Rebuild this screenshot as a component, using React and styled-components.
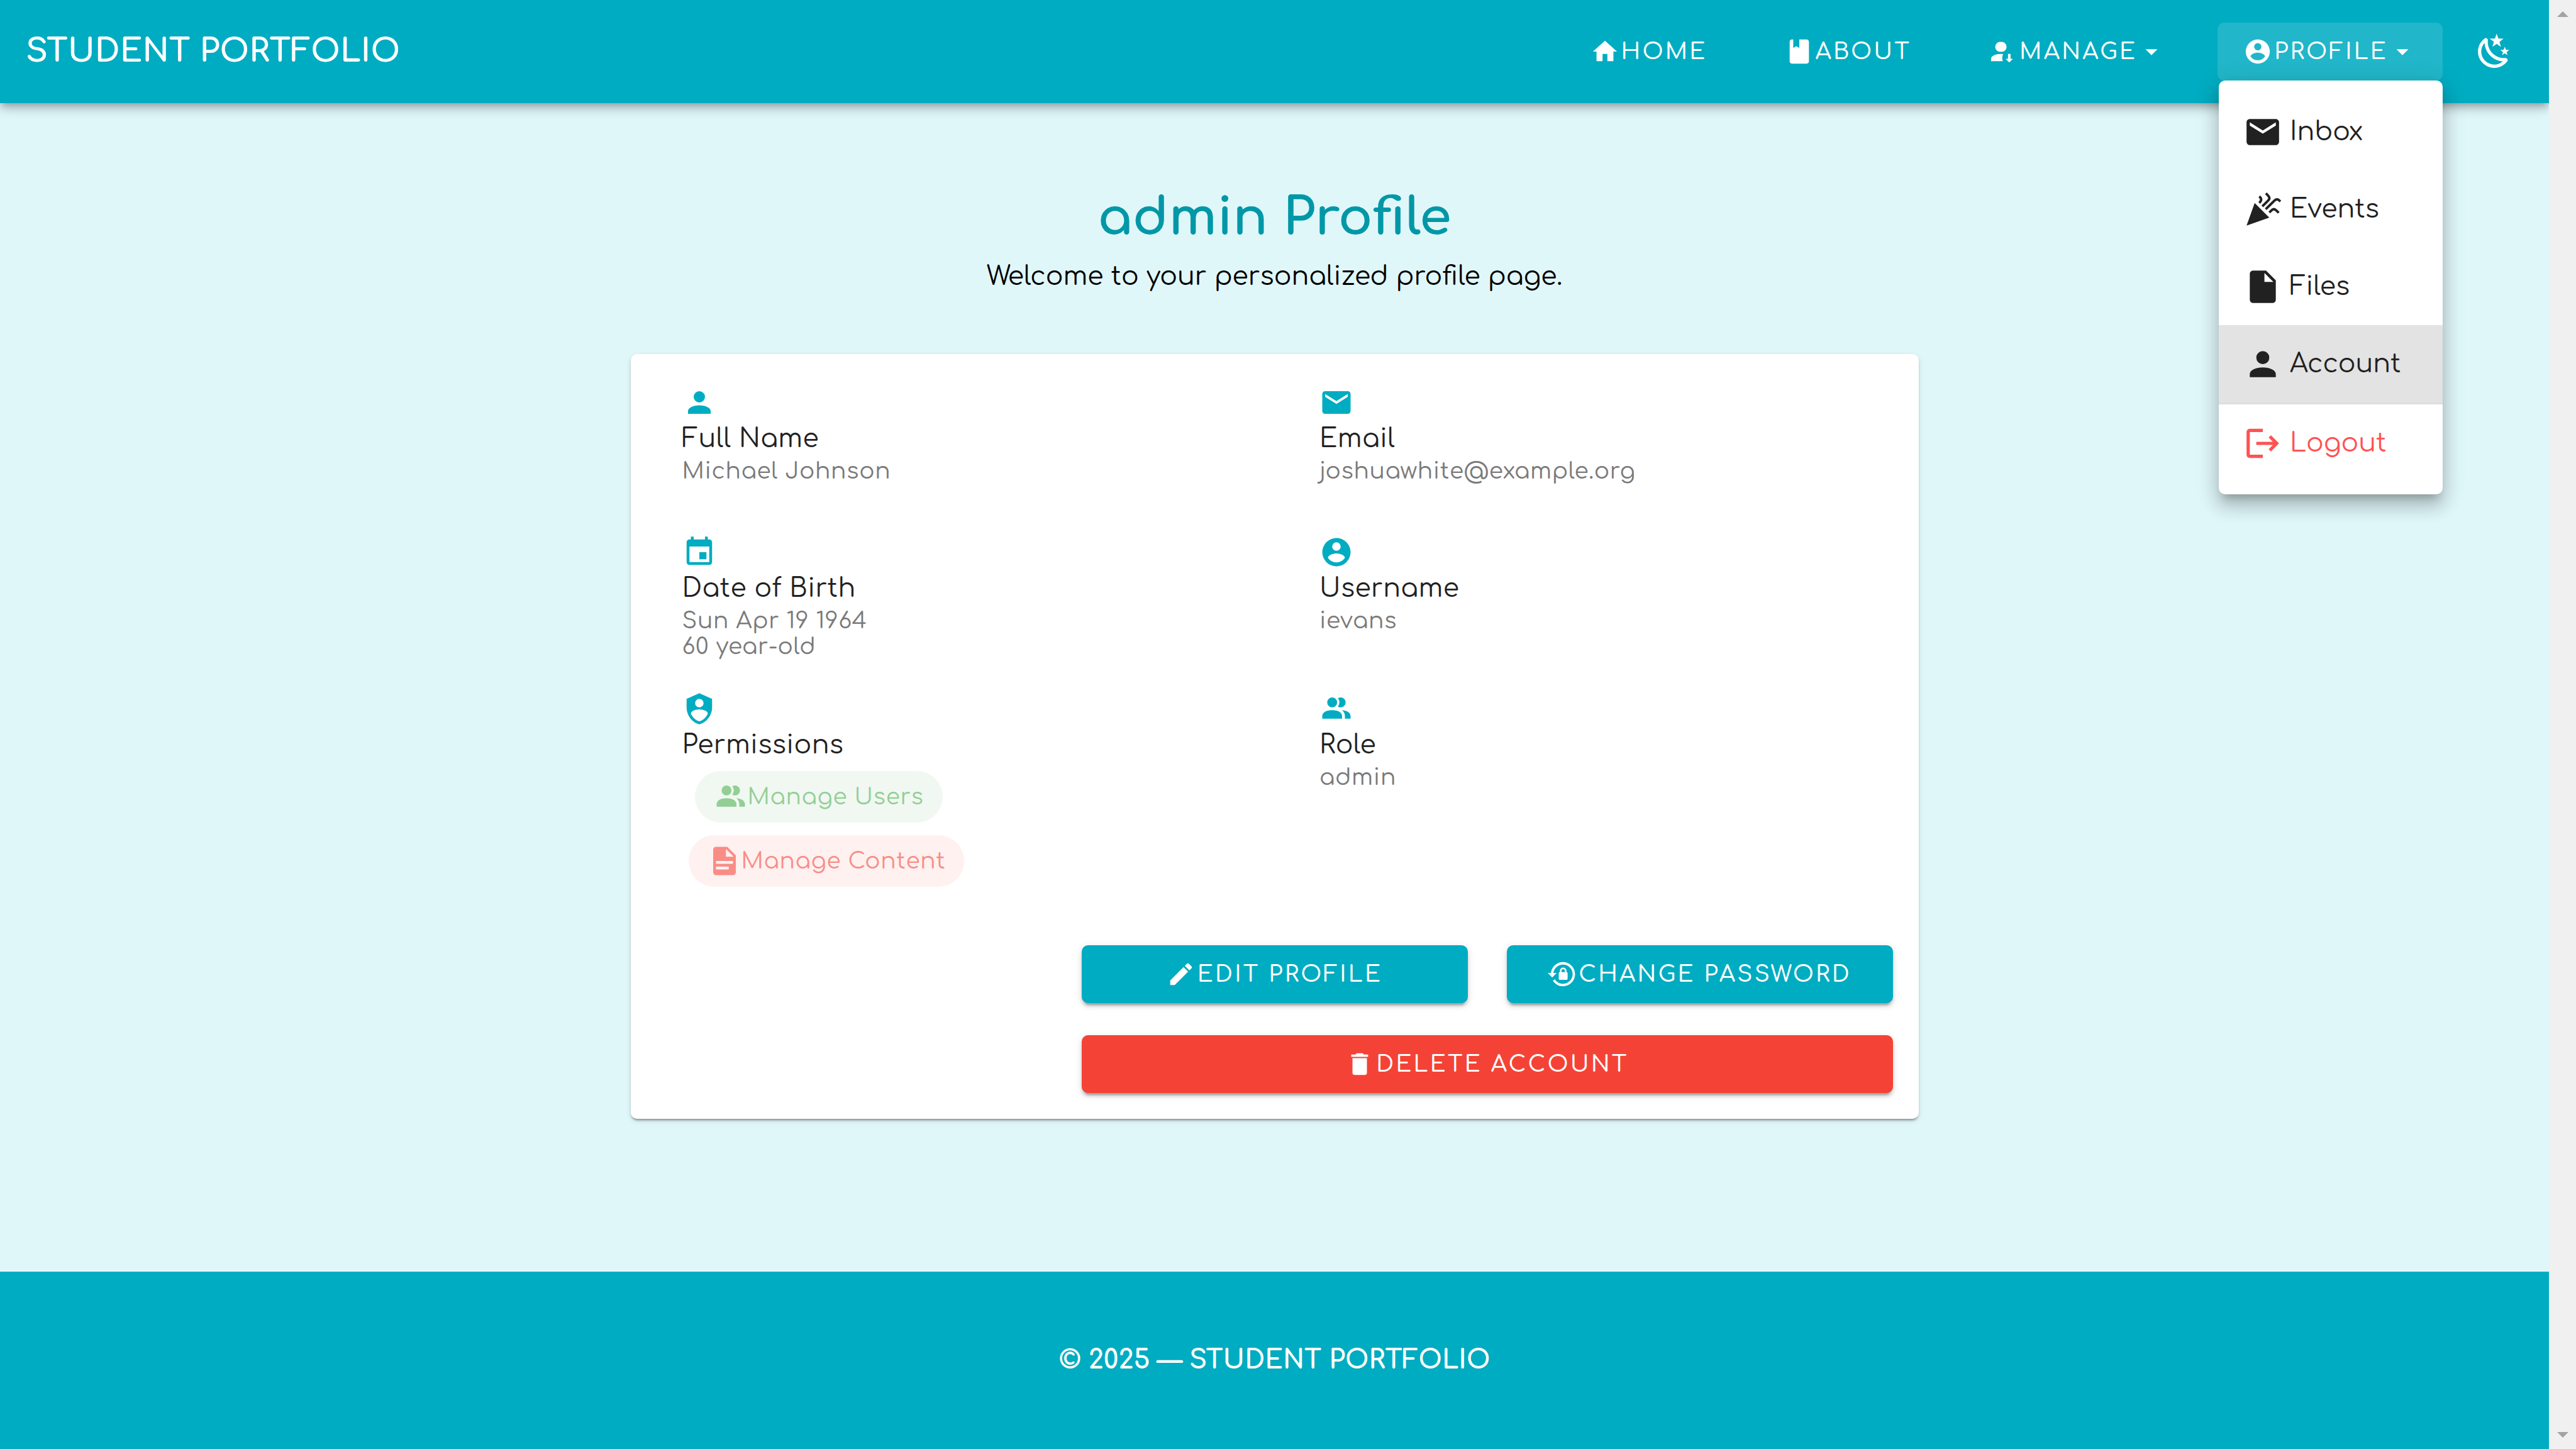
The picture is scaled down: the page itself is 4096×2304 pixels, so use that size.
import React from "react";
import styled, { createGlobalStyle } from "styled-components";

const color = {
  primary: "#00acc1",
  primaryDark: "#0097a7",
  page: "#e0f7fa",
  surface: "#ffffff",
  text: "#212121",
  muted: "#7a7a7a",
  error: "#f44336",
  danger: "#ff5252",
  success: "#4caf50",
};

const GlobalStyle = createGlobalStyle`
  *, *::before, *::after { box-sizing: border-box; }
  body {
    margin: 0;
    background: ${color.page};
    color: ${color.text};
    font-family: Comfortaa, Quicksand, Inter, sans-serif;
    font-size: 41px;
  }
  h1, p, ul, dl, dd { margin: 0; padding: 0; }
  a { color: inherit; text-decoration: none; }
  button { font: inherit; color: inherit; border: 0; background: none; cursor: pointer; }
`;

/* ---------- icons ---------- */

const icons = {
  home: "M10,20V14H14V20H19V12H22L12,3L2,12H5V20H10Z",
  book: "M18,22A2,2 0 0,0 20,20V4C20,2.89 19.1,2 18,2H12V9L9.5,7.5L7,9V2H6A2,2 0 0,0 4,4V20A2,2 0 0,0 6,22H18Z",
  accountArrowDown:
    "M10.2,4A4.1,4.1 0 1,1 10.2,12.1A4.1,4.1 0 1,1 10.2,4M12.1,14.1Q11.3,15.5 11.3,17.2Q11.3,18.8 11.9,20H2V18C2,15.8 5.6,14 10,14Q11,14 12.1,14.1M16.1,14H18.2V18H20.2L17.1,21L14.1,18H16.1Z",
  accountCircle:
    "M12,19.2C9.5,19.2 7.29,17.92 6,16C6.03,14 10,12.9 12,12.9C14,12.9 17.97,14 18,16C16.71,17.92 14.5,19.2 12,19.2M12,5A3,3 0 0,1 15,8A3,3 0 0,1 12,11A3,3 0 0,1 9,8A3,3 0 0,1 12,5M12,2A10,10 0 0,0 2,12A10,10 0 0,0 12,22A10,10 0 0,0 22,12C22,6.47 17.5,2 12,2Z",
  menuDown: "M7,10L12,15L17,10H7Z",
  night:
    "M17.75,4.09L15.22,6.03L16.13,9.09L13.5,7.28L10.87,9.09L11.78,6.03L9.25,4.09L12.44,4L13.5,1L14.56,4L17.75,4.09M21.25,11L19.61,12.25L20.2,14.23L18.5,13.06L16.8,14.23L17.39,12.25L15.75,11L17.81,10.95L18.5,9L19.19,10.95L21.25,11M18.97,15.95C19.8,15.87 20.69,17.05 20.16,17.8C19.84,18.25 19.5,18.67 19.08,19.07C15.17,23 8.84,23 4.94,19.07C1.03,15.17 1.03,8.83 4.94,4.93C5.34,4.53 5.76,4.17 6.21,3.85C6.96,3.32 8.14,4.21 8.06,5.04C7.79,7.9 8.75,10.87 10.95,13.06C13.14,15.26 16.1,16.22 18.97,15.95M17.33,17.97C14.5,17.81 11.7,16.64 9.53,14.5C7.36,12.31 6.2,9.5 6.04,6.68C3.23,9.82 3.34,14.64 6.35,17.66C9.37,20.67 14.19,20.78 17.33,17.97Z",
  email:
    "M20,8L12,13L4,8V6L12,11L20,6M20,4H4C2.89,4 2,4.89 2,6V18A2,2 0 0,0 4,20H20A2,2 0 0,0 22,18V6C22,4.89 21.1,4 20,4Z",
  file: "M13,9V3.5L18.5,9M6,2C4.89,2 4,2.89 4,4V20A2,2 0 0,0 6,22H18A2,2 0 0,0 20,20V8L14,2H6Z",
  account:
    "M12,4A4,4 0 0,1 16,8A4,4 0 0,1 12,12A4,4 0 0,1 8,8A4,4 0 0,1 12,4M12,14C16.42,14 20,15.79 20,18V20H4V18C4,15.79 7.58,14 12,14Z",
  logout:
    "M17 7L15.59 8.41L18.17 11H8V13H18.17L15.59 15.58L17 17L22 12M4 5H12V3H4C2.9 3 2 3.9 2 5V19C2 20.1 2.9 21 4 21H12V19H4V5Z",
  calendar:
    "M19,19H5V8H19M16,1V3H8V1H6V3H5C3.89,3 3,3.89 3,5V19A2,2 0 0,0 5,21H19A2,2 0 0,0 21,19V5C21,3.89 20.1,3 19,3H18V1M17,12H12V17H17V12Z",
  shield:
    "M12,1L3,5V11C3,16.55 6.84,21.74 12,23C17.16,21.74 21,16.55 21,11V5L12,1M12,5A3,3 0 0,1 15,8A3,3 0 0,1 12,11A3,3 0 0,1 9,8A3,3 0 0,1 12,5M17.13,17C15.92,18.85 14.11,20.24 12,20.92C9.89,20.24 8.08,18.85 6.87,17C6.53,16.5 6.24,16 6,15.47C6,13.82 8.71,12.47 12,12.47C15.29,12.47 18,13.79 18,15.47C17.76,16 17.47,16.5 17.13,17Z",
  group:
    "M16 17V19H2V17S2 13 9 13 16 17 16 17M12.5 7.5A3.5 3.5 0 1 0 9 11A3.5 3.5 0 0 0 12.5 7.5M15.94 13A5.32 5.32 0 0 1 18 17V19H22V17S22 13.37 15.94 13M15 4A3.39 3.39 0 0 0 13.07 4.59A5 5 0 0 1 13.07 10.41A3.39 3.39 0 0 0 15 11A3.5 3.5 0 0 0 15 4Z",
  document:
    "M13,9H18.5L13,3.5V9M6,2H14L20,8V20A2,2 0 0,1 18,22H6C4.89,22 4,21.1 4,20V4C4,2.89 4.89,2 6,2M15,18V16H6V18H15M18,14V12H6V14H18Z",
  pencil:
    "M20.71,7.04C21.1,6.65 21.1,6 20.71,5.63L18.37,3.29C18,2.9 17.35,2.9 16.96,3.29L15.12,5.12L18.87,8.87M3,17.25V21H6.75L17.81,9.93L14.06,6.18L3,17.25Z",
  lockReset:
    "M12.63,2C18.16,2 22.64,6.5 22.64,12C22.64,17.5 18.16,22 12.63,22C9.12,22 6.05,20.18 4.26,17.43L5.84,16.18C7.25,18.47 9.76,20 12.64,20A8,8 0 0,0 20.64,12A8,8 0 0,0 12.64,4C8.56,4 5.2,7.06 4.71,11H7.47L3.73,14.73L0,11H2.69C3.19,5.95 7.45,2 12.63,2M15.59,10.24C16.09,10.25 16.5,10.65 16.5,11.16V15.77C16.5,16.27 16.09,16.69 15.58,16.69H10.05C9.54,16.69 9.13,16.27 9.13,15.77V11.16C9.13,10.65 9.54,10.25 10.04,10.24V9.23C10.04,7.7 11.29,6.46 12.81,6.46C14.34,6.46 15.59,7.7 15.59,9.23V10.24M12.81,7.86C12.06,7.86 11.44,8.47 11.44,9.23V10.24H14.19V9.23C14.19,8.47 13.57,7.86 12.81,7.86Z",
  trash: "M19,4H15.5L14.5,3H9.5L8.5,4H5V6H19M6,19A2,2 0 0,0 8,21H16A2,2 0 0,0 18,19V7H6V19Z",
};

const Svg = styled.svg`
  flex: none;
  display: block;
  width: ${(p) => p.$size}px;
  height: ${(p) => p.$size}px;
  fill: currentColor;
`;

function Icon({ name, size = 46 }) {
  if (name === "party") {
    return (
      <Svg $size={size} viewBox="0 0 24 24" aria-hidden="true">
        <path d="M2,22L7,8L16,17Z" />
        <path
          d="M9.8,4C11.4,5.2 11.4,6.6 9.8,8M13.9,2.1L15.3,3.5C16.3,4.5 16.3,5.5 15.3,6.5L11.7,10.1M13.8,11.9L19.1,6.6C20.1,5.6 21.2,5.5 22.1,6.4L22.8,7.1M16,13.9L17.3,12.6C18.3,11.6 19.3,11.6 20.3,12.6L21.8,14.1"
          fill="none"
          stroke="currentColor"
          strokeWidth="1.5"
        />
      </Svg>
    );
  }
  return (
    <Svg $size={size} viewBox="0 0 24 24" aria-hidden="true">
      <path d={icons[name]} />
    </Svg>
  );
}

/* ---------- page frame ---------- */

const Frame = styled.div`
  display: flex;
  min-height: 100vh;
`;

const Page = styled.div`
  flex: 1;
  min-width: 0;
  display: flex;
  flex-direction: column;
`;

const ScrollTrack = styled.div`
  flex: none;
  width: 43px;
  display: flex;
  flex-direction: column;
  align-items: center;
  justify-content: space-between;
  padding: 18px 0;
  background: #f0f0f0;
  color: #a3a3a3;
  position: relative;
  z-index: 3;
`;

const ScrollArrow = styled.svg`
  display: block;
  width: 18px;
  height: 9px;
  fill: currentColor;
`;

/* ---------- header ---------- */

const Header = styled.header`
  position: relative;
  z-index: 2;
  display: flex;
  align-items: center;
  justify-content: space-between;
  height: 164px;
  padding: 0 26px 0 41px;
  background: ${color.primary};
  color: #fff;
  box-shadow: 0 5px 10px -3px rgba(0, 0, 0, 0.2), 0 10px 13px rgba(0, 0, 0, 0.14),
    0 3px 26px rgba(0, 0, 0, 0.12);
`;

const Brand = styled.a`
  font-size: 51px;
  font-weight: 700;
  line-height: 72px;
`;

const Nav = styled.nav`
  display: flex;
  align-items: center;
  gap: 41px;
`;

const NavItem = styled.a`
  display: flex;
  align-items: center;
  height: 92px;
  padding: 0 41px;
  border-radius: 10px;
  background: ${(p) => (p.$active ? "rgba(255, 255, 255, 0.13)" : "transparent")};
  font-size: 36px;
  font-weight: 500;
  letter-spacing: 0.0892857143em;
  text-transform: uppercase;
  white-space: nowrap;

  & > svg:first-child {
    margin-right: 3px;
  }
`;

const NavMenu = styled.div`
  position: relative;
`;

const Tools = styled.div`
  display: flex;
  align-items: center;
  gap: 20px;
`;

const IconButton = styled.button`
  display: grid;
  place-items: center;
  width: 123px;
  height: 123px;
  padding: 0;
  border-radius: 50%;
`;

const Menu = styled.ul`
  position: absolute;
  top: 100%;
  right: 0;
  width: 356px;
  padding: 20px 0;
  list-style: none;
  border-radius: 10px;
  background: ${color.surface};
  color: ${color.text};
  box-shadow: 0 13px 13px -8px rgba(0, 0, 0, 0.2), 0 20px 26px 3px rgba(0, 0, 0, 0.14),
    0 8px 36px 5px rgba(0, 0, 0, 0.12);
`;

const MenuItem = styled.li`
  border-bottom: ${(p) => (p.$divided ? "3px solid #dedede" : "0")};
`;

const MenuLink = styled.a`
  display: flex;
  align-items: center;
  gap: 12px;
  height: 123px;
  padding: 0 39px;
  background: ${(p) => (p.$current ? "#e3e3e3" : "transparent")};
  color: ${(p) => (p.$danger ? color.danger : "inherit")};
`;

/* ---------- profile ---------- */

const Main = styled.main`
  flex: 1;
  display: flex;
  flex-direction: column;
  align-items: center;
  padding: 132px 41px 0;
`;

const Title = styled.h1`
  color: ${color.primaryDark};
  font-size: 82px;
  font-weight: 700;
  line-height: 102px;
`;

const Lead = styled.p`
  color: #000;
  line-height: 84px;
  margin-bottom: 81px;
`;

const Card = styled.section`
  width: 100%;
  max-width: 2048px;
  padding: 50px 41px 41px;
  border-radius: 10px;
  background: ${color.surface};
  box-shadow: 0 5px 3px -3px rgba(0, 0, 0, 0.2), 0 3px 3px rgba(0, 0, 0, 0.14),
    0 3px 8px rgba(0, 0, 0, 0.12);
`;

const Fields = styled.dl`
  display: grid;
  grid-template-columns: 1fr 1fr;
  column-gap: 102px;
  padding-left: 41px;
`;

const Field = styled.div`
  min-height: 238px;
  padding-bottom: 51px;
  color: ${color.muted};
`;

const FieldIcon = styled.div`
  display: flex;
  color: ${color.primary};
`;

const FieldLabel = styled.dt`
  color: ${color.text};
  font-size: 41px;
  line-height: 62px;
  letter-spacing: 0.009375em;
`;

const FieldValue = styled.dd`
  font-size: 36px;
  line-height: 41px;
  letter-spacing: 0.0178571429em;
`;

const Chips = styled.div`
  display: flex;
  flex-direction: column;
  align-items: flex-start;
  gap: 20px;
  padding: 10px;
`;

const Chip = styled.span`
  display: flex;
  align-items: center;
  height: 82px;
  margin-left: ${(p) => (p.$inset ? 10 : 0)}px;
  padding: 0 30px;
  border-radius: 41px;
  opacity: 0.6;
  color: ${(p) => color[p.$tone]};
  background: ${(p) => (p.$tone === "success" ? "rgba(76, 175, 80, 0.12)" : "rgba(244, 67, 54, 0.12)")};
`;

const Actions = styled.div`
  display: grid;
  grid-template-columns: 614px 614px;
  gap: 51px 62px;
  justify-content: end;
  margin-top: 32px;
`;

const ActionButton = styled.button`
  display: flex;
  align-items: center;
  justify-content: center;
  gap: 3px;
  grid-column: ${(p) => (p.$wide ? "1 / -1" : "auto")};
  height: 92px;
  padding: 0 41px;
  border-radius: 10px;
  background: ${(p) => color[p.$tone]};
  color: #fff;
  font-size: 36px;
  font-weight: 500;
  letter-spacing: 0.0892857143em;
  text-transform: uppercase;
  box-shadow: 0 8px 3px -5px rgba(0, 0, 0, 0.2), 0 5px 5px rgba(0, 0, 0, 0.14),
    0 3px 13px rgba(0, 0, 0, 0.12);
`;

/* ---------- footer ---------- */

const Footer = styled.footer`
  display: flex;
  align-items: center;
  justify-content: center;
  height: 282px;
  background: ${color.primary};
  color: #fff;
  font-weight: 700;
`;

const menuItems = [
  { icon: "email", label: "Inbox" },
  { icon: "party", label: "Events" },
  { icon: "file", label: "Files" },
  { icon: "account", label: "Account", current: true },
  { icon: "logout", label: "Logout", danger: true },
];

const fields = [
  { icon: "account", label: "Full Name", values: ["Michael Johnson"] },
  { icon: "email", label: "Email", values: ["joshuawhite@example.org"] },
  { icon: "calendar", label: "Date of Birth", values: ["Sun Apr 19 1964", "60 year-old"] },
  { icon: "accountCircle", label: "Username", values: ["ievans"] },
  {
    icon: "shield",
    label: "Permissions",
    chips: [
      { icon: "group", label: "Manage Users", tone: "success", inset: true },
      { icon: "document", label: "Manage Content", tone: "error" },
    ],
  },
  { icon: "group", label: "Role", values: ["admin"] },
];

function ProfileMenu() {
  return (
    <NavMenu>
      <NavItem as="button" type="button" aria-haspopup="true" aria-expanded="true" $active>
        <Icon name="accountCircle" />
        Profile
        <Icon name="menuDown" />
      </NavItem>
      <Menu>
        {menuItems.map((item) => (
          <MenuItem key={item.label} $divided={item.current}>
            <MenuLink href="#" $current={item.current} $danger={item.danger}>
              <Icon name={item.icon} size={62} />
              {item.label}
            </MenuLink>
          </MenuItem>
        ))}
      </Menu>
    </NavMenu>
  );
}

export default function App() {
  return (
    <>
      <GlobalStyle />
      <Frame>
        <Page>
          <Header>
            <Brand href="#">STUDENT PORTFOLIO</Brand>
            <Tools>
              <Nav>
                <NavItem href="#">
                  <Icon name="home" />
                  Home
                </NavItem>
                <NavItem href="#">
                  <Icon name="book" />
                  About
                </NavItem>
                <NavItem as="button" type="button" aria-haspopup="true">
                  <Icon name="accountArrowDown" />
                  Manage
                  <Icon name="menuDown" />
                </NavItem>
                <ProfileMenu />
              </Nav>
              <IconButton type="button" aria-label="Toggle dark theme">
                <Icon name="night" size={62} />
              </IconButton>
            </Tools>
          </Header>

          <Main>
            <Title>admin Profile</Title>
            <Lead>Welcome to your personalized profile page.</Lead>
            <Card>
              <Fields>
                {fields.map((field) => (
                  <Field key={field.label}>
                    <FieldIcon>
                      <Icon name={field.icon} size={54} />
                    </FieldIcon>
                    <FieldLabel>{field.label}</FieldLabel>
                    {field.values?.map((value) => (
                      <FieldValue key={value}>{value}</FieldValue>
                    ))}
                    {field.chips && (
                      <FieldValue>
                        <Chips>
                          {field.chips.map((chip) => (
                            <Chip key={chip.label} $tone={chip.tone} $inset={chip.inset}>
                              <Icon name={chip.icon} size={54} />
                              {chip.label}
                            </Chip>
                          ))}
                        </Chips>
                      </FieldValue>
                    )}
                  </Field>
                ))}
              </Fields>
              <Actions>
                <ActionButton type="button" $tone="primary">
                  <Icon name="pencil" />
                  Edit Profile
                </ActionButton>
                <ActionButton type="button" $tone="primary">
                  <Icon name="lockReset" />
                  Change Password
                </ActionButton>
                <ActionButton type="button" $tone="error" $wide>
                  <Icon name="trash" />
                  Delete Account
                </ActionButton>
              </Actions>
            </Card>
          </Main>

          <Footer>© 2025 — STUDENT PORTFOLIO</Footer>
        </Page>
        <ScrollTrack aria-hidden="true">
          <ScrollArrow viewBox="0 0 18 9">
            <path d="M9,0L18,9H0Z" />
          </ScrollArrow>
          <ScrollArrow viewBox="0 0 18 9">
            <path d="M0,0H18L9,9Z" />
          </ScrollArrow>
        </ScrollTrack>
      </Frame>
    </>
  );
}
